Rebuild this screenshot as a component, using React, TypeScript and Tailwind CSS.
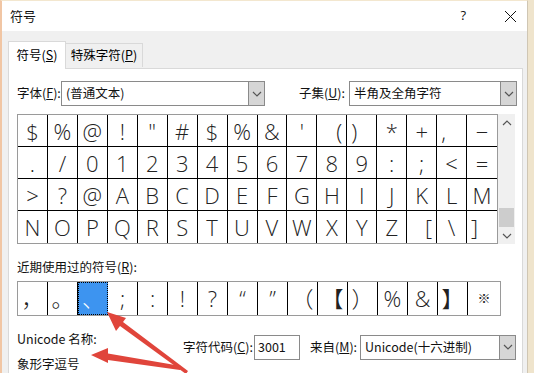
import { ReactNode } from "react";

type Cell = { ch: string; align?: "left" | "right" };

const grid: Cell[][] = [
  ["$", "%", "@", "!", '"', "#", "$", "%", "&", "'", "(", ")", "*", "+", ",", "−"].map((ch) => ({ ch })),
  [".", "/", "0", "1", "2", "3", "4", "5", "6", "7", "8", "9", ":", ";", "<", "="].map((ch) => ({ ch })),
  [">", "?", "@", "A", "B", "C", "D", "E", "F", "G", "H", "I", "J", "K", "L", "M"].map((ch) => ({ ch })),
  ["N", "O", "P", "Q", "R", "S", "T", "U", "V", "W", "X", "Y", "Z", "[", "\\", "]"].map((ch) => ({ ch })),
];
grid[0][10].align = "right";
grid[0][11].align = "left";
grid[0][14].align = "left";
grid[3][13].align = "right";
grid[3][15].align = "left";

const recent = ["，", "。", "、", ";", ":", "!", "?", "“", "”", "（", "【", "）", "%", "&", "】", "※"];

const ui = { fontFamily: '"Noto Sans CJK SC", "Noto Sans", sans-serif' };
const glyph = { fontFamily: '"Open Sans", "Noto Sans", sans-serif' };
const mixed = { fontFamily: '"Open Sans", "Noto Sans CJK SC", sans-serif' };

const Chevron = ({ up = false }: { up?: boolean }) => (
  <svg width="10" height="6" viewBox="0 0 10 6">
    <polyline
      points={up ? "1,5 5,1 9,5" : "1,1 5,5 9,1"}
      fill="none"
      stroke="#555"
      strokeWidth="1.2"
    />
  </svg>
);

const Combo = ({ value, className }: { value: ReactNode; className: string }) => (
  <div className={`flex h-[25px] border border-[#8a8a8a] bg-white ${className}`}>
    <div className="flex flex-1 items-center pl-[4px] text-[12.5px] text-[#111]">{value}</div>
    <div className="flex w-[16px] items-center justify-center border-l border-[#8a8a8a] bg-[#d6d6d6]">
      <Chevron />
    </div>
  </div>
);

const U = ({ children }: { children: ReactNode }) => <span className="underline">{children}</span>;

export default function App() {
  return (
    <div className="relative flex h-[373px] w-[534px] overflow-hidden bg-[#efe4cc]" style={ui}>
      <div className="flex h-full w-[528px] flex-col border-l-2 border-t border-[#f1c6a4] border-t-[#f3e7cf] bg-[#f0f0f0] border-r border-r-[#cfc6b4]">
        {/* title bar */}
        <div className="flex h-[30px] shrink-0 items-center bg-white pl-[8px] pr-[10px] text-[13px] text-[#111]">
          <span>符号</span>
          <span className="ml-auto mr-[38px] text-[13px]" style={glyph}>?</span>
          <svg width="13" height="13" viewBox="0 0 13 13">
            <path d="M1 1 L12 12 M12 1 L1 12" stroke="#111" strokeWidth="1" />
          </svg>
        </div>

        {/* tabs */}
        <div className="flex h-[37px] shrink-0 items-end pl-[6px]">
          <div className="relative z-10 -mb-px flex h-[28px] w-[58px] items-center justify-center border border-b-0 border-[#d9d9d9] bg-white text-[12.5px]">
            符号(<U>S</U>)
          </div>
          <div className="mb-[1px] flex h-[24px] w-[77px] items-center justify-center border border-l-0 border-b-0 border-[#d9d9d9] bg-[#f0f0f0] text-[12.5px]">
            特殊字符(<U>P</U>)
          </div>
        </div>

        {/* panel */}
        <div className="ml-[6px] mr-[4px] flex flex-1 flex-col border border-[#d9d9d9] bg-white pl-[8px] pr-[5px] pt-[12px] text-[12.5px] text-[#111]">
          <div className="flex items-center">
            <span className="w-[44px]">字体(<U>F</U>):</span>
            <Combo value="(普通文本)" className="w-[204px]" />
            <span className="ml-auto mr-[4px]">子集(<U>U</U>):</span>
            <Combo value="半角及全角字符" className="w-[168px]" />
          </div>

          <div className="mt-[8px] flex">
            <div className="flex w-[481px] flex-col border border-[#9a9a9a]">
              {grid.map((row, r) => (
                <div key={r} className={`flex h-[32px] ${r < 3 ? "border-b border-black" : ""}`}>
                  {row.map((c, i) => (
                    <div
                      key={i}
                      className={`flex w-[30px] items-center text-[22px] font-light leading-none text-[#222] ${
                        i < 15 ? "border-r border-black" : ""
                      } ${c.align === "left" ? "justify-start pl-[4px]" : c.align === "right" ? "justify-end pr-[4px]" : "justify-center"}`}
                      style={glyph}
                    >
                      {c.ch}
                    </div>
                  ))}
                </div>
              ))}
            </div>
            <div className="flex w-[17px] flex-col items-center bg-[#f0f0f0]">
              <div className="flex h-[17px] items-center">
                <Chevron up />
              </div>
              <div className="flex-1" />
              <div className="h-[19px] w-[15px] bg-[#cdcdcd]" />
              <div className="flex h-[17px] items-center">
                <Chevron />
              </div>
            </div>
          </div>

          <div className="mt-[14px]">近期使用过的符号(<U>R</U>):</div>

          <div className="mt-[4px] flex h-[35px] w-[484px] border border-[#9a9a9a]">
            {recent.map((ch, i) => (
              <div
                key={i}
                className={`flex w-[30px] shrink-0 items-center justify-center font-light leading-none ${
                  i === 15 ? "flex-1 text-[13px]" : "border-r border-black text-[22px]"
                } ${i === 2 ? "border border-dotted border-[#222] bg-[#3d94f0] text-white" : "text-[#222]"}`}
                style={mixed}
              >
                {ch}
              </div>
            ))}
          </div>

          <div className="mt-[10px] flex">
            <div className="flex w-[166px] flex-col">
              <span className="mt-[4px]">Unicode 名称:</span>
              <span className="mt-[6px]">象形字逗号</span>
            </div>
            <div className="mt-[9px] flex h-[25px] items-center">
              <span className="w-[71px]">字符代码(<U>C</U>):</span>
              <div className="flex h-[25px] w-[46px] items-center border border-[#8a8a8a] pl-[3px]">3001</div>
              <span className="ml-[10px] w-[50px]">来自(<U>M</U>):</span>
              <Combo value="Unicode(十六进制)" className="w-[156px]" />
            </div>
          </div>
        </div>
      </div>

      {/* red annotation arrows */}
      <svg className="pointer-events-none absolute left-0 top-0" width="534" height="373" viewBox="0 0 534 373">
        <polygon
          points="107,312 126,318 123,322 188,371 186,374 120,326 116,331"
          fill="#e0453b"
        />
        <polygon
          points="91,355 108,348 108,353.5 181,366 180,370 108,360 108,363"
          fill="#e0453b"
        />
      </svg>
    </div>
  );
}
